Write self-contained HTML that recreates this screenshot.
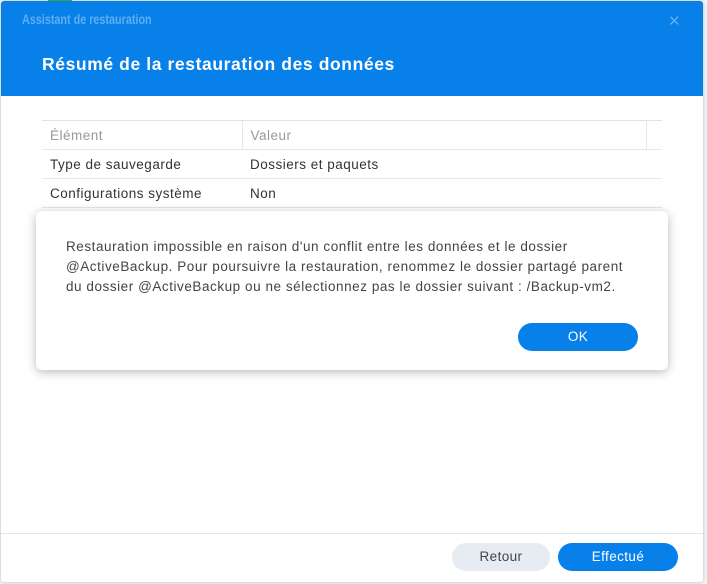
<!DOCTYPE html>
<html><head><meta charset="utf-8"><style>
*{margin:0;padding:0;box-sizing:border-box}
body{width:707px;height:584px;overflow:hidden;background:#f3f5f7;font-family:"Liberation Sans","DejaVu Sans",sans-serif;position:relative}
.win{position:absolute;left:1px;top:1px;width:702px;height:581px;background:#fff;box-shadow:0 0 4px rgba(0,0,0,.25);border-radius:3px;overflow:hidden}
.hdr{position:absolute;left:0;top:0;width:100%;height:95px;background:#0880ea}
.t1{position:absolute;left:21px;top:11px;font-size:13.5px;font-weight:bold;color:#5fadf2;transform:scaleX(0.8);transform-origin:left;white-space:nowrap}
.x{position:absolute;left:667px;top:11px;font-size:15px;font-weight:bold;color:#5fadf2}
.t2{position:absolute;left:41px;top:53px;font-size:17.5px;font-weight:bold;color:#fff;letter-spacing:0.6px}
table{position:absolute;left:41px;top:119px;width:620px;border-collapse:collapse;font-size:13.5px;color:#333;letter-spacing:0.5px}
td{height:29px;border-top:1px solid #e3e8ee;border-bottom:1px solid #e3e8ee;padding-left:8px}
.h td{color:#999;border-top:1px solid #dde3ea}
.foot{position:absolute;left:0;top:532px;width:100%;border-top:1px solid #e3e6ea}
.btn{position:absolute;height:28px;border-radius:14px;font-size:13.5px;text-align:center;line-height:28px;letter-spacing:0.4px}
.alert{position:absolute;left:36px;top:211px;width:632px;height:159px;background:#fff;border-radius:6px;box-shadow:0 2px 10px rgba(0,0,0,.28)}
.msg{position:absolute;left:30px;top:26px;font-size:13.5px;line-height:20px;color:#444;letter-spacing:0.55px;white-space:nowrap}
</style></head><body>
<div style="position:absolute;left:48px;top:0;width:24px;height:2px;background:#3cb34a"></div>
<div class="win">
<div class="hdr"><div class="t1">Assistant de restauration</div><div class="x">✕</div><div class="t2">Résumé de la restauration des données</div></div>
<table>
<tr class="h"><td style="width:200px;border-right:1px solid #e3e8ee">Élément</td><td style="border-right:1px solid #e3e8ee">Valeur</td><td style="width:16px"></td></tr>
<tr><td>Type de sauvegarde</td><td colspan="2">Dossiers et paquets</td></tr>
<tr><td>Configurations système</td><td colspan="2">Non</td></tr>
</table>
<div class="foot"></div>
<div class="btn" style="left:451px;top:542px;width:98px;background:#e7ecf2;color:#444">Retour</div>
<div class="btn" style="left:557px;top:542px;width:120px;background:#0880ea;color:#fff">Effectué</div>
</div>
<div class="alert">
<div class="msg">Restauration impossible en raison d'un conflit entre les données et le dossier<br>@ActiveBackup. Pour poursuivre la restauration, renommez le dossier partagé parent<br>du dossier @ActiveBackup ou ne sélectionnez pas le dossier suivant : /Backup-vm2.</div>
<div class="btn" style="left:482px;top:112px;width:120px;background:#0880ea;color:#fff">OK</div>
</div>
</body></html>
